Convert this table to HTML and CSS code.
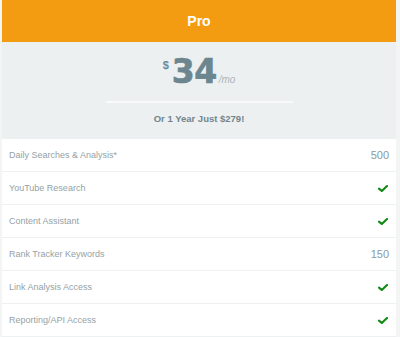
FILE: index.html
```html
<!DOCTYPE html>
<html>
<head>
<meta charset="utf-8">
<link rel="stylesheet" href="styles.css">
</head>
<body>
<div class="card">
  <div class="head">Pro</div>
  <div class="pricing">
    <div class="price"><span class="cur">$</span><span class="amt">34</span><span class="per">/mo</span></div>
    <div class="divider"></div>
    <div class="yearly">Or 1 Year Just $279!</div>
  </div>
  <ul class="features">
    <li class="row"><span class="label">Daily Searches &amp; Analysis*</span><span class="val">500</span></li>
    <li class="row"><span class="label">YouTube Research</span><svg class="check" viewBox="0 0 10 7" width="10" height="7"><path d="M1 3.6 L3.8 6 L9 1" fill="none" stroke="#118a14" stroke-width="2.1" stroke-linecap="round" stroke-linejoin="round"/></svg></li>
    <li class="row"><span class="label">Content Assistant</span><svg class="check" viewBox="0 0 10 7" width="10" height="7"><path d="M1 3.6 L3.8 6 L9 1" fill="none" stroke="#118a14" stroke-width="2.1" stroke-linecap="round" stroke-linejoin="round"/></svg></li>
    <li class="row"><span class="label">Rank Tracker Keywords</span><span class="val">150</span></li>
    <li class="row"><span class="label">Link Analysis Access</span><svg class="check" viewBox="0 0 10 7" width="10" height="7"><path d="M1 3.6 L3.8 6 L9 1" fill="none" stroke="#118a14" stroke-width="2.1" stroke-linecap="round" stroke-linejoin="round"/></svg></li>
    <li class="row"><span class="label">Reporting/API Access</span><svg class="check" viewBox="0 0 10 7" width="10" height="7"><path d="M1 3.6 L3.8 6 L9 1" fill="none" stroke="#118a14" stroke-width="2.1" stroke-linecap="round" stroke-linejoin="round"/></svg></li>
  </ul>
</div>
</body>
</html>
```
FILE: styles.css
```css
html, body {
  margin: 0;
  padding: 0;
  background: #f3f5f5;
  font-family: "Liberation Sans", Arial, sans-serif;
}
.card {
  margin-left: 2px;
  width: 394px;
  background: #ffffff;
}
.head {
  height: 42px;
  line-height: 42px;
  background: #f39c12;
  color: #ffffff;
  font-weight: bold;
  font-size: 14px;
  text-align: center;
}
.pricing {
  background: #ecf0f1;
  height: 97px;
  box-sizing: border-box;
  padding-top: 13px;
  display: flex;
  flex-direction: column;
  align-items: center;
}
.price {
  line-height: 33px;
  height: 33px;
  white-space: nowrap;
}
.cur {
  display: inline-block;
  vertical-align: top;
  margin-top: 4px;
  font-size: 11px;
  line-height: 12px;
  font-weight: bold;
  color: #6f8891;
  margin-right: 3px;
}
.amt {
  font-family: "DejaVu Sans", sans-serif;
  font-weight: bold;
  font-size: 33px;
  color: #6c868f;
  letter-spacing: -0.5px;
  -webkit-text-stroke: 0.7px #6c868f;
}
.per {
  font-style: italic;
  font-size: 10px;
  color: #aab6b9;
  margin-left: 2px;
}
.divider {
  margin-top: 13px;
  width: 187px;
  height: 2px;
  background: #f8fafa;
}
.yearly {
  margin-top: 10px;
  font-size: 9.5px;
  line-height: 12px;
  font-weight: bold;
  color: #71858d;
}
.features {
  list-style: none;
  margin: 0;
  padding: 0;
}
.row {
  height: 33px;
  box-sizing: border-box;
  border-bottom: 1px solid #eef1f1;
  padding: 0 7px 0 7px;
  display: flex;
  align-items: center;
  justify-content: space-between;
}
.label {
  font-size: 9px;
  color: #94a2a6;
}
.val {
  font-size: 11px;
  color: #8a999e;
}
.check {
  display: block;
  margin-right: 1px;
}
```
